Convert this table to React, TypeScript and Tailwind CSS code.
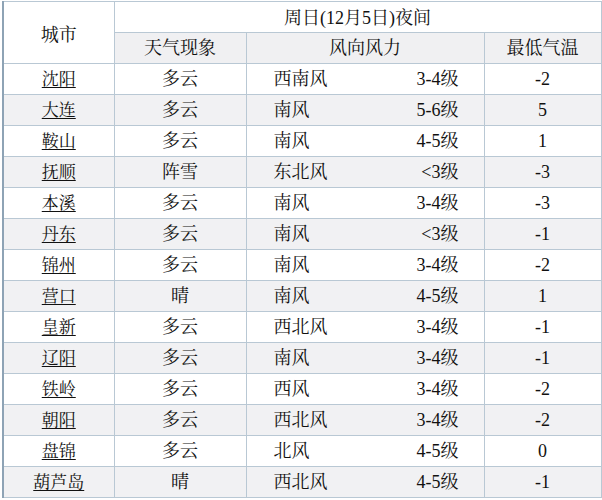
import React from "react";

const rows: [string, string, string, string, string][] = [
  ["沈阳", "多云", "西南风", "3-4级", "-2"],
  ["大连", "多云", "南风", "5-6级", "5"],
  ["鞍山", "多云", "南风", "4-5级", "1"],
  ["抚顺", "阵雪", "东北风", "<3级", "-3"],
  ["本溪", "多云", "南风", "3-4级", "-3"],
  ["丹东", "多云", "南风", "<3级", "-1"],
  ["锦州", "多云", "南风", "3-4级", "-2"],
  ["营口", "晴", "南风", "4-5级", "1"],
  ["皇新", "多云", "西北风", "3-4级", "-1"],
  ["辽阳", "多云", "南风", "3-4级", "-1"],
  ["铁岭", "多云", "西风", "3-4级", "-2"],
  ["朝阳", "多云", "西北风", "3-4级", "-2"],
  ["盘锦", "多云", "北风", "4-5级", "0"],
  ["葫芦岛", "晴", "西北风", "4-5级", "-1"],
];

const font = {
  fontFamily:
    '"Liberation Serif", "Noto Serif CJK SC", "Noto Sans CJK SC", serif',
};

export default function App() {
  return (
    <div className="w-[602px] h-[500px] bg-white pt-[1px] pl-[2px]" style={font}>
      <table className="table-fixed border-collapse w-[598px] text-[18px] text-[#111] leading-none">
        <colgroup>
          <col className="w-[111px]" />
          <col className="w-[132px]" />
          <col className="w-[238px]" />
          <col className="w-[117px]" />
        </colgroup>
        <thead>
          <tr className="h-[31px]">
            <th
              rowSpan={2}
              className="font-normal border border-[#b9c8d4] border-l-2 border-l-[#8ea3b5] bg-white text-center align-middle pt-[4px]"
            >
              城市
            </th>
            <th
              colSpan={3}
              className="font-normal border border-[#b9c8d4] bg-white text-center pt-[2px]"
            >
              周日(12月5日)夜间
            </th>
          </tr>
          <tr className="h-[31px] bg-[#f0f0f2]">
            <th className="font-normal border border-[#b9c8d4] text-center">天气现象</th>
            <th className="font-normal border border-[#b9c8d4] text-center">风向风力</th>
            <th className="font-normal border border-[#b9c8d4] text-center">最低气温</th>
          </tr>
        </thead>
        <tbody>
          {rows.map((r, i) => (
            <tr key={r[0]} className={`h-[31px] ${i % 2 === 1 ? "bg-[#f1f1f3]" : "bg-white"}`}>
              <td className="border border-[#b9c8d4] border-l-2 border-l-[#8ea3b5] text-center text-[17px]">
                <span className="underline underline-offset-2 decoration-1">{r[0]}</span>
              </td>
              <td className="border border-[#b9c8d4] text-center">{r[1]}</td>
              <td className="border border-[#b9c8d4] pl-[27px] pr-[25px]">
                <div className="flex justify-between items-center">
                  <span>{r[2]}</span>
                  <span>{r[3]}</span>
                </div>
              </td>
              <td className="border border-[#b9c8d4] text-center">{r[4]}</td>
            </tr>
          ))}
        </tbody>
      </table>
    </div>
  );
}
